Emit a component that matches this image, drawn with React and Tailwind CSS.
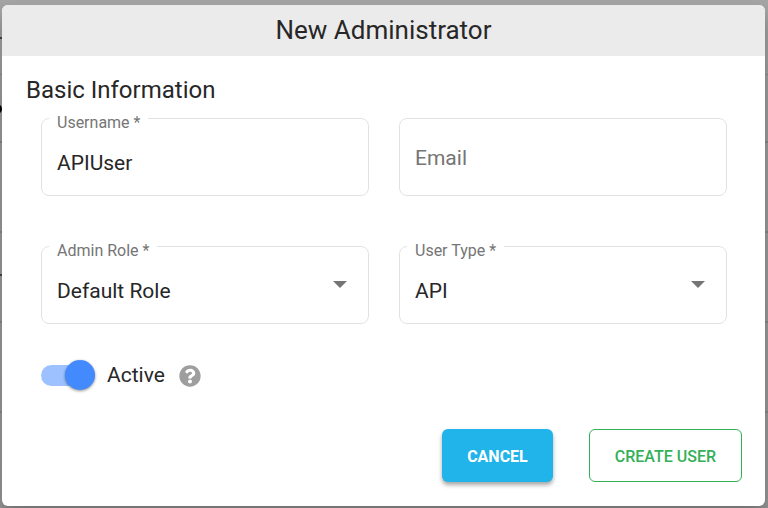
import React, { useState } from 'react';
import { FaQuestionCircle } from 'react-icons/fa';

const roles = ['Default Role', 'Super Admin', 'Read Only'];
const userTypes = ['API', 'Local', 'SSO'];

const SelectField = ({ id, label, value, onChange, options }) => (
  <fieldset className="min-w-0 rounded-lg border border-[#e2e2e2] px-[7px]">
    <legend className="px-2 pt-2.5 text-base leading-[14px] text-[#757575]">
      <label htmlFor={id}>{label} *</label>
    </legend>
    <div className="relative">
      <select
        id={id}
        value={value}
        onChange={(e) => onChange(e.target.value)}
        className="block h-[65px] w-full appearance-none bg-transparent px-2 pt-0.5 text-[21px] outline-none"
      >
        {options.map((option) => (
          <option key={option}>{option}</option>
        ))}
      </select>
      <svg
        viewBox="0 0 14 7"
        className="pointer-events-none absolute right-3.5 top-[23px] h-[7px] w-3.5 fill-[#757575]"
      >
        <path d="M0 0h14L7 7z" />
      </svg>
    </div>
  </fieldset>
);

// Table rows that show through behind the dialog
const Backdrop = () => (
  <div
    aria-hidden="true"
    className="absolute inset-0 overflow-hidden bg-linear-to-b from-[#a4a4a4] via-[#9b9c9b] via-20% to-[#979897]"
  >
    <div className="h-[75px] border-b border-[#8a8b8a] pt-[37px]">
      <div className="h-0.5 w-1 bg-[#444444]" />
    </div>
    <div className="h-[68px] border-b-2 border-[#868786] pt-[29px]">
      <div className="-ml-2 size-2.5 rounded-full bg-black" />
    </div>
    <div className="h-[90px] border-b-2 border-[#868786]" />
    <div className="h-[90px] border-b-2 border-[#868786] pt-[41px]">
      <div className="h-0.5 w-1 bg-[#444444]" />
    </div>
    <div className="h-[90px] border-b-2 border-[#868786]" />
  </div>
);

const App = () => {
  const [username, setUsername] = useState('APIUser');
  const [email, setEmail] = useState('');
  const [role, setRole] = useState('Default Role');
  const [userType, setUserType] = useState('API');
  const [active, setActive] = useState(true);

  return (
    <div className="relative min-h-screen pb-0.5 pl-0.5 pr-[3px] pt-[5px] font-[Roboto,sans-serif] text-[#272727]">
      <Backdrop />

      <div
        role="dialog"
        aria-labelledby="dialog-title"
        className="relative overflow-hidden rounded-md bg-white shadow-[0_11px_15px_rgba(0,0,0,0.25)]"
      >
        {/* Header */}
        <h1 id="dialog-title" className="bg-[#ebebeb] text-center text-[26px] leading-[51px]">
          New Administrator
        </h1>

        <form onSubmit={(e) => e.preventDefault()} className="pb-6 pt-5">
          <h2 className="px-6 text-2xl leading-7">Basic Information</h2>

          {/* Fields */}
          <div className="mt-0.5 grid grid-cols-2 items-end gap-x-[30px] gap-y-[38px] pl-[39px] pr-[38px]">
            <fieldset className="min-w-0 rounded-lg border border-[#e2e2e2] px-[7px]">
              <legend className="px-2 pt-2.5 text-base leading-[14px] text-[#757575]">
                <label htmlFor="username">Username *</label>
              </legend>
              <input
                id="username"
                type="text"
                value={username}
                onChange={(e) => setUsername(e.target.value)}
                className="block h-[65px] w-full bg-transparent px-2 text-[21px] outline-none"
              />
            </fieldset>

            <div className="relative rounded-lg border border-[#e2e2e2] px-[7px]">
              {!email && (
                <label
                  htmlFor="email"
                  className="pointer-events-none absolute inset-0 flex items-center px-[15px] pt-1 text-[21px] text-[#757575]"
                >
                  Email
                </label>
              )}
              <input
                id="email"
                type="email"
                value={email}
                onChange={(e) => setEmail(e.target.value)}
                className="block h-[76px] w-full bg-transparent px-2 text-[21px] outline-none"
              />
            </div>

            <SelectField id="role" label="Admin Role" value={role} onChange={setRole} options={roles} />
            <SelectField id="user-type" label="User Type" value={userType} onChange={setUserType} options={userTypes} />
          </div>

          {/* Active toggle */}
          <div className="mt-9 flex items-center px-[39px]">
            <input
              id="active"
              type="checkbox"
              role="switch"
              checked={active}
              onChange={(e) => setActive(e.target.checked)}
              className="flex h-[21px] w-[54px] appearance-none items-center rounded-full bg-[#bdbdbd] before:size-[30px] before:shrink-0 before:rounded-full before:bg-white before:shadow-[0_1px_3px_rgba(0,0,0,0.45)] checked:justify-end checked:bg-[#9dc1ff] checked:before:bg-[#448aff]"
            />
            <label htmlFor="active" className="ml-3 text-[21px] leading-[30px]">Active</label>
            <button type="button" aria-label="Help" className="ml-3.5 pt-0.5 text-[#9e9e9e]">
              <FaQuestionCircle className="size-[22px]" />
            </button>
          </div>

          {/* Actions */}
          <div className="mt-[39px] flex justify-end gap-9 px-[23px]">
            <button
              type="button"
              className="h-[53px] rounded-md bg-[#21b4ea] px-[25px] pt-0.5 text-base font-bold text-white shadow-[0_3px_4px_rgba(0,0,0,0.35)]"
            >
              CANCEL
            </button>
            <button
              type="submit"
              className="h-[53px] rounded-md border border-[#34b058] px-[25px] pt-0.5 text-base font-medium text-[#34b058]"
            >
              CREATE USER
            </button>
          </div>
        </form>
      </div>
    </div>
  );
};

export default App;
